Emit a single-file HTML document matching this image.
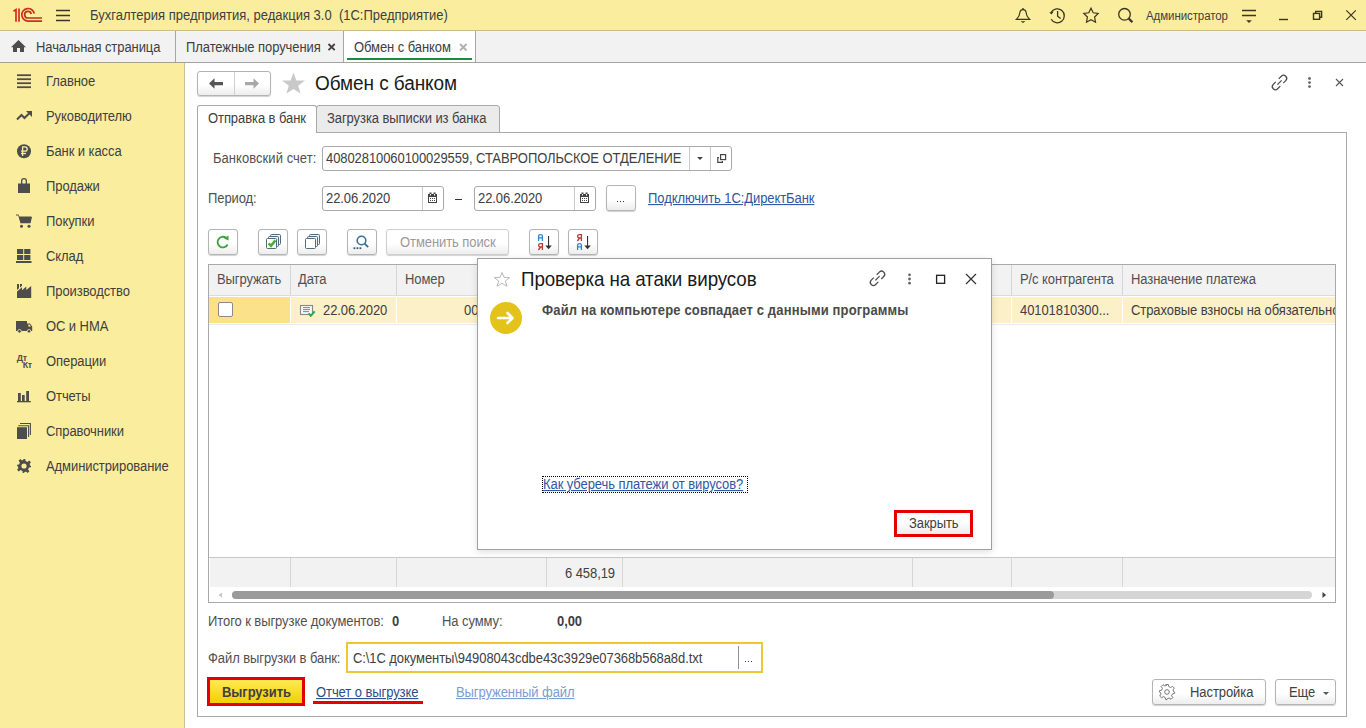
<!DOCTYPE html>
<html><head><meta charset="utf-8">
<style>
*{margin:0;padding:0;box-sizing:border-box}
html,body{width:1366px;height:728px;overflow:hidden;background:#fff;font-family:"Liberation Sans",sans-serif;font-size:13px;color:#333}
.a{position:absolute}
.t{position:absolute;white-space:nowrap;line-height:15px;font-size:13px;color:#404040;transform:scaleY(1.08);transform-origin:0 0;letter-spacing:-0.08px}
svg{position:absolute;overflow:visible}
#top{left:0;top:0;width:1366px;height:31px;background:#FBED9E;border-bottom:1px solid #C9BC86}
#tabs{left:0;top:31px;width:1366px;height:32px;background:#F2F2F2;border-top:1px solid #FCF6DC;border-bottom:1px solid #A3A3A3}
#side{left:0;top:63px;width:185px;height:665px;background:#FBED9E;border-right:1px solid #C9BF98}
.btn{position:absolute;border:1px solid #B4B4B4;border-radius:3px;background:linear-gradient(#fff 0%,#fff 55%,#EDEDED 100%);box-shadow:0 1px 1px rgba(0,0,0,.18)}
.fld{position:absolute;border:1px solid #A9A9A9;border-radius:3px;background:#fff}
.link{color:#2F56A3;text-decoration:underline}
</style></head><body>

<!-- TOP BAR -->
<div id="top" class="a"></div>
<div class="t" style="left:90px;top:7px;letter-spacing:0">Бухгалтерия предприятия, редакция 3.0&nbsp; (1С:Предприятие)</div>
<div class="t" style="left:1146px;top:8px;font-size:11.5px">Администратор</div>

<!-- TAB BAR -->
<div id="tabs" class="a"></div><div class="a" style="left:0;top:62px;width:185px;height:1px;background:#A8A28A"></div>
<div class="a" style="left:175px;top:31px;width:1px;height:31px;background:#A6A6A6"></div>
<div class="a" style="left:343px;top:31px;width:133px;height:31px;background:#fff;border-left:1px solid #A6A6A6;border-right:1px solid #A6A6A6"></div>
<div class="a" style="left:347px;top:58px;width:125px;height:2px;background:#1D8B3C"></div>
<div class="t" style="left:36px;top:39px">Начальная страница</div>
<div class="t" style="left:186px;top:39px">Платежные поручения</div>
<div class="t" style="left:354px;top:39px">Обмен с банком</div>

<!-- SIDEBAR -->
<div id="side" class="a"></div>
<div class="t" style="left:46px;top:73px">Главное</div>
<div class="t" style="left:46px;top:108px">Руководителю</div>
<div class="t" style="left:46px;top:143px">Банк и касса</div>
<div class="t" style="left:46px;top:178px">Продажи</div>
<div class="t" style="left:46px;top:213px">Покупки</div>
<div class="t" style="left:46px;top:248px">Склад</div>
<div class="t" style="left:46px;top:283px">Производство</div>
<div class="t" style="left:46px;top:318px">ОС и НМА</div>
<div class="t" style="left:46px;top:353px">Операции</div>
<div class="t" style="left:46px;top:388px">Отчеты</div>
<div class="t" style="left:46px;top:423px">Справочники</div>
<div class="t" style="left:46px;top:458px">Администрирование</div>

<!-- FORM HEADER -->
<div class="btn" style="left:197px;top:71px;width:74px;height:25px"></div>
<div class="a" style="left:234px;top:72px;width:1px;height:23px;background:#D0D0D0"></div>
<div class="t" style="left:315px;top:72px;font-size:19px;line-height:22px;color:#1a1a1a">Обмен с банком</div>

<!-- FORM TABS / PANEL -->
<div class="a" style="left:197px;top:132px;width:1150px;height:585px;border:1px solid #A9A9A9;border-top:none"></div>
<div class="a" style="left:499px;top:132px;width:848px;height:1px;background:#A9A9A9"></div>
<div class="a" style="left:197px;top:105px;width:120px;height:28px;background:#fff;border:1px solid #A9A9A9;border-bottom:none;border-radius:3px 3px 0 0"></div>
<div class="a" style="left:316px;top:105px;width:184px;height:28px;background:#EBEBEB;border:1px solid #A9A9A9;border-radius:3px 3px 0 0"></div>
<div class="t" style="left:208px;top:110px">Отправка в банк</div>
<div class="t" style="left:327px;top:110px">Загрузка выписки из банка</div>

<div class="t" style="left:213px;top:150px;color:#505050;letter-spacing:0.05px">Банковский счет:</div>
<div class="fld" style="left:322px;top:146px;width:410px;height:25px"></div>
<div class="a" style="left:689px;top:147px;width:1px;height:23px;background:#C8C8C8"></div>
<div class="a" style="left:710px;top:147px;width:1px;height:23px;background:#C8C8C8"></div>
<div class="t" style="left:326px;top:150px">40802810060100029559, СТАВРОПОЛЬСКОЕ ОТДЕЛЕНИЕ</div>

<div class="t" style="left:208px;top:190px;color:#505050">Период:</div>
<div class="fld" style="left:322px;top:186px;width:122px;height:25px"></div>
<div class="a" style="left:422px;top:187px;width:1px;height:23px;background:#C8C8C8"></div>
<div class="t" style="left:326px;top:190px">22.06.2020</div>
<div class="a" style="left:455px;top:199px;width:7px;height:1px;background:#333"></div>
<div class="fld" style="left:474px;top:186px;width:122px;height:25px"></div>
<div class="a" style="left:574px;top:187px;width:1px;height:23px;background:#C8C8C8"></div>
<div class="t" style="left:478px;top:190px">22.06.2020</div>
<div class="btn" style="left:606px;top:185px;width:30px;height:26px"></div>
<div class="a" style="left:617px;top:201px;width:1px;height:1px;background:#333;box-shadow:3px 0 #333,6px 0 #333"></div>
<div class="t link" style="left:648px;top:190px">Подключить 1С:ДиректБанк</div>

<!-- TOOLBAR -->
<div class="btn" style="left:208px;top:229px;width:30px;height:26px"></div>
<div class="btn" style="left:258px;top:229px;width:30px;height:26px"></div>
<div class="btn" style="left:297px;top:229px;width:30px;height:26px"></div>
<div class="btn" style="left:347px;top:229px;width:30px;height:26px"></div>
<div class="btn" style="left:386px;top:229px;width:123px;height:26px;border-color:#CFCFCF"></div>
<div class="t" style="left:400px;top:234px;color:#9A9A9A">Отменить поиск</div>
<div class="btn" style="left:529px;top:229px;width:30px;height:26px"></div>
<div class="btn" style="left:568px;top:229px;width:30px;height:26px"></div>

<!-- TABLE -->
<div class="a" style="left:208px;top:264px;width:1128px;height:339px;border:1px solid #A9A9A9;background:#fff"></div>
<div class="a" style="left:209px;top:265px;width:1126px;height:30px;background:#F2F2F2"></div>
<div class="a" style="left:209px;top:297px;width:1126px;height:26px;background:#FCF0C8"></div>
<div class="a" style="left:209px;top:297px;width:81px;height:26px;background:#FBE28A"></div>
<div class="a" style="left:290px;top:265px;width:1px;height:30px;background:#D6D6D6"></div><div class="a" style="left:290px;top:296px;width:1px;height:27px;background:#fff"></div><div class="a" style="left:396px;top:265px;width:1px;height:30px;background:#D6D6D6"></div><div class="a" style="left:396px;top:296px;width:1px;height:27px;background:#fff"></div><div class="a" style="left:546px;top:265px;width:1px;height:30px;background:#D6D6D6"></div><div class="a" style="left:546px;top:296px;width:1px;height:27px;background:#fff"></div><div class="a" style="left:622px;top:265px;width:1px;height:30px;background:#D6D6D6"></div><div class="a" style="left:622px;top:296px;width:1px;height:27px;background:#fff"></div><div class="a" style="left:912px;top:265px;width:1px;height:30px;background:#D6D6D6"></div><div class="a" style="left:912px;top:296px;width:1px;height:27px;background:#fff"></div><div class="a" style="left:1011px;top:265px;width:1px;height:30px;background:#D6D6D6"></div><div class="a" style="left:1011px;top:296px;width:1px;height:27px;background:#fff"></div><div class="a" style="left:1122px;top:265px;width:1px;height:30px;background:#D6D6D6"></div><div class="a" style="left:1122px;top:296px;width:1px;height:27px;background:#fff"></div>
<div class="a" style="left:209px;top:295px;width:1126px;height:1px;background:#DCDCDC"></div><div class="a" style="left:209px;top:323px;width:1126px;height:1px;background:#fff"></div><div class="a" style="left:209px;top:324px;width:1126px;height:1px;background:#EBEBEB"></div>
<div class="t" style="left:217px;top:271px;color:#505050">Выгружать</div>
<div class="t" style="left:298px;top:271px;color:#505050">Дата</div>
<div class="t" style="left:405px;top:271px;color:#505050">Номер</div>
<div class="t" style="left:1020px;top:271px;color:#505050">Р/с контрагента</div>
<div class="t" style="left:1131px;top:271px;color:#505050">Назначение платежа</div>
<div class="a" style="left:218px;top:302px;width:15px;height:15px;border:1px solid #8A8A8A;border-radius:2px;background:#fff"></div>
<div class="t" style="left:323px;top:302px">22.06.2020</div>
<div class="t" style="left:464px;top:302px">00</div>
<div class="t" style="left:1020px;top:302px">40101810300...</div>
<div class="t" style="left:1131px;top:302px;width:204px;overflow:hidden">Страховые взносы на обязательное</div>
<div class="a" style="left:209px;top:557px;width:1126px;height:1px;background:#C8C8C8"></div>
<div class="a" style="left:210px;top:558px;width:1125px;height:29px;background:#F2F2F2"></div>
<div class="a" style="left:290px;top:558px;width:1px;height:29px;background:#D6D6D6"></div><div class="a" style="left:396px;top:558px;width:1px;height:29px;background:#D6D6D6"></div><div class="a" style="left:546px;top:558px;width:1px;height:29px;background:#D6D6D6"></div><div class="a" style="left:622px;top:558px;width:1px;height:29px;background:#D6D6D6"></div><div class="a" style="left:912px;top:558px;width:1px;height:29px;background:#D6D6D6"></div><div class="a" style="left:1011px;top:558px;width:1px;height:29px;background:#D6D6D6"></div><div class="a" style="left:1122px;top:558px;width:1px;height:29px;background:#D6D6D6"></div>
<div class="t" style="left:565px;top:565px">6 458,19</div>
<div class="a" style="left:232px;top:591px;width:1080px;height:8px;border-radius:4px;background:#D5D5D5"></div>
<div class="a" style="left:232px;top:591px;width:822px;height:8px;border-radius:4px;background:#9A9A9A"></div>

<!-- BOTTOM -->
<div class="t" style="left:208px;top:613px;color:#505050">Итого к выгрузке документов:</div>
<div class="t" style="left:392px;top:613px;font-weight:bold">0</div>
<div class="t" style="left:442px;top:613px;color:#505050">На сумму:</div>
<div class="t" style="left:557px;top:613px;font-weight:bold">0,00</div>
<div class="t" style="left:208px;top:650px;color:#505050">Файл выгрузки в банк:</div>
<div class="a" style="left:346px;top:642px;width:417px;height:31px;border:2px solid #EFC63A;background:#fff"></div>
<div class="a" style="left:738px;top:646px;width:1px;height:23px;background:#909090"></div>
<div class="t" style="left:353px;top:650px">C:\1C документы\94908043cdbe43c3929e07368b568a8d.txt</div>
<div class="a" style="left:745px;top:661px;width:1.2px;height:1.2px;background:#444;box-shadow:3px 0 #444,6px 0 #444"></div>

<div class="a" style="left:207px;top:677px;width:98px;height:29px;border:3px solid #E50000;background:linear-gradient(#FFEA55,#F4CF00)"></div>
<div class="t" style="left:222px;top:684px;font-weight:bold">Выгрузить</div>
<div class="t link" style="left:316px;top:684px;color:#2B4C8C">Отчет о выгрузке</div>
<div class="a" style="left:313px;top:701px;width:110px;height:3px;background:#E50000"></div>
<div class="t link" style="left:456px;top:684px;color:#7B9CD1">Выгруженный файл</div>

<div class="btn" style="left:1152px;top:679px;width:114px;height:26px"></div>
<div class="t" style="left:1190px;top:684px">Настройка</div>
<div class="btn" style="left:1275px;top:679px;width:61px;height:26px"></div>
<div class="t" style="left:1289px;top:684px">Еще</div>


<!-- ICONS MAIN -->
<svg width="1366" height="728" style="left:0;top:0" viewBox="0 0 1366 728">
 <!-- 1C logo -->
 <g fill="none" stroke="#D52B1E" stroke-width="1.7">
  <path d="M13.5 11.2 L16 9.6 L16 21.8"/>
  <path d="M19 8.6 L19 21.8"/>
  <path d="M34.3 13.6 A6.3 6.3 0 1 0 28.2 21.1 L42 21.1"/>
  <path d="M31.2 14 A3.3 3.3 0 1 0 28.2 18 L42 18" stroke="#B8341A"/>
 </g>
 <!-- hamburger -->
 <g stroke="#3b3522" stroke-width="1.4">
  <path d="M56 10.5H70M56 15.5H70M56 20.5H70"/>
 </g>
 <!-- bell -->
 <g fill="none" stroke="#3b3522" stroke-width="1.2">
  <path d="M1016.5 19.3 C1019 17 1019.8 14.5 1020 12 C1020.2 10.3 1021.5 9.6 1023 9.6 C1024.5 9.6 1025.8 10.3 1026 12 C1026.2 14.5 1027 17 1029.5 19.3 Z"/>
 </g>
 <circle cx="1023" cy="8.9" r="0.9" fill="#3b3522"/>
 <path d="M1020.5 21.3 H1025.5 L1023 23 Z" fill="#3b3522"/>
 <!-- history -->
 <g fill="none" stroke="#3b3522" stroke-width="1.3">
  <path d="M1051.3 12.2 A7 7 0 1 1 1051.2 19.3"/>
  <path d="M1057.6 11 V16.2 L1060.6 18.6"/>
 </g>
 <path d="M1049.3 12.4 L1053.6 11.6 L1051.6 14.6 Z" fill="#3b3522"/>
 <!-- star outline -->
 <path d="M1091 8.2 L1093.2 12.8 L1098.2 13.5 L1094.6 17 L1095.5 22.2 L1091 19.8 L1086.5 22.2 L1087.4 17 L1083.8 13.5 L1088.8 12.8 Z" fill="none" stroke="#3b3522" stroke-width="1.2" stroke-linejoin="miter"/>
 <!-- search -->
 <circle cx="1124.5" cy="14.3" r="5.8" fill="none" stroke="#3b3522" stroke-width="1.3"/>
 <path d="M1128.8 18.6 L1132.4 22.2" stroke="#3b3522" stroke-width="2.2"/>
 <!-- filter -->
 <path d="M1242 10.5H1256M1242 15.5H1256" stroke="#3b3522" stroke-width="1.4"/>
 <path d="M1246.2 20.2H1251.8L1249 23Z" fill="#3b3522"/>
 <!-- minimize -->
 <path d="M1279 19.5H1288" stroke="#3b3522" stroke-width="1.4"/>
 <!-- restore -->
 <g fill="none" stroke="#3b3522" stroke-width="1.4">
  <path d="M1315.7 13 V11.4 H1321.6 V17.2 H1319.8"/>
  <rect x="1313.5" y="13.4" width="6.1" height="5.9"/>
 </g>
 <!-- close -->
 <path d="M1346.3 10.3 L1355.8 19.8 M1355.8 10.3 L1346.3 19.8" stroke="#3b3522" stroke-width="1.2"/>

 <!-- home -->
 <path d="M18.5 40 L11 47.3 H13 V52 H17 V48 H20 V52 H24 V47.3 H26 Z" fill="#4D4D4D"/>
 <!-- tab close bold -->
 <path d="M328.5 44 L334.7 50.2 M334.7 44 L328.5 50.2" stroke="#404040" stroke-width="1.8"/>
 <!-- tab close light -->
 <path d="M460 44 L466.5 50.5 M466.5 44 L460 50.5" stroke="#B0B0B0" stroke-width="1.8"/>

 <!-- sidebar icons -->
 <g fill="#4D4D4D">
  <rect x="17" y="74.3" width="14" height="1.8"/><rect x="17" y="78.3" width="14" height="1.8"/><rect x="17" y="82.3" width="14" height="1.8"/><rect x="17" y="86.3" width="14" height="1.8"/>
 </g>
 <path d="M17 119.5 L21.5 115 L24.5 118 L29.5 113" fill="none" stroke="#4D4D4D" stroke-width="2"/>
 <path d="M26 111 H32 V117 Z" fill="#4D4D4D"/>
 <circle cx="24" cy="151.2" r="7" fill="#4D4D4D"/>
 <g fill="none" stroke="#FBED9E" stroke-width="1.3"><path d="M22.6 156 V146.8 H25 A2.2 2.2 0 0 1 25 151.2 H21"/><path d="M21 153.5 H26"/></g>
 <path d="M18 183.5 H21 V181 A3 3 0 0 1 27 181 V183.5 H30 V193 H18 Z M22.3 183.5 H25.7 V181 A1.7 1.7 0 0 0 22.3 181 Z" fill="#4D4D4D" fill-rule="evenodd"/>
 <path d="M16 214.5 H18.5 L19.5 217 H32 L30.5 223.2 H20.5 L18.2 215.6 H16 Z" fill="#4D4D4D"/>
 <path d="M19 216.5 H31.5 L30 223 H21 Z" fill="#4D4D4D"/>
 <circle cx="21.5" cy="226.2" r="1.5" fill="#4D4D4D"/><circle cx="29" cy="226.2" r="1.5" fill="#4D4D4D"/>
 <g fill="#4D4D4D">
  <rect x="17" y="249" width="6.2" height="5"/><rect x="24.2" y="249" width="6.2" height="5"/><rect x="17" y="255" width="6.2" height="5"/><rect x="24.2" y="255" width="6.2" height="5"/><rect x="16" y="261" width="15.5" height="2"/>
 </g>
 <path d="M17 298 V291.5 L22 287.2 V290.3 L26.3 286.5 V290 L31.2 286 V298 Z M17 290 V284 H19 V288.3 Z M20 287.5 V284 H22 V285.8 Z" fill="#4D4D4D"/>
 <path d="M16 321 H27 V331 H16 Z M27 323.5 H30 L32.2 326.5 V331 H27 Z" fill="#4D4D4D"/>
 <path d="M28.3 324.5 H29.6 L31 326.5 H28.3 Z" fill="#FBED9E"/>
 <circle cx="19.5" cy="331.3" r="1.8" fill="#4D4D4D" stroke="#FBED9E" stroke-width="0.8"/><circle cx="29" cy="331.3" r="1.8" fill="#4D4D4D" stroke="#FBED9E" stroke-width="0.8"/>
 <text x="16.8" y="360.6" font-family="Liberation Sans" font-weight="bold" font-size="8.8" letter-spacing="-0.3" fill="#4D4D4D">Дт</text>
 <text x="22.7" y="368" font-family="Liberation Sans" font-weight="bold" font-size="8.8" letter-spacing="-0.3" fill="#4D4D4D">Кт</text>
 <g fill="#4D4D4D"><rect x="18" y="393" width="2.8" height="8.3"/><rect x="22" y="395" width="2.7" height="6.3"/><rect x="26.2" y="391" width="2.8" height="10.3"/><rect x="17" y="401" width="13.8" height="1.3"/></g>
 <rect x="17" y="427.2" width="10" height="11.8" fill="#4D4D4D"/>
 <path d="M18.2 425.7 H28.6 V437" fill="none" stroke="#4D4D4D" stroke-width="1.1"/>
 <path d="M20 423.5 H30.4 V435" fill="none" stroke="#4D4D4D" stroke-width="1.1"/>
 <g transform="translate(24 466)">
  <path d="M-1.2 -7 H1.2 L1.6 -4.9 L3.5 -4.1 L5.2 -5.4 L6.9 -3.7 L5.6 -2 L6.4 -0.1 L7 0 V0 L7 1.2 L4.9 1.6 L4.1 3.5 L5.4 5.2 L3.7 6.9 L2 5.6 L0.1 6.4 L-0.2 7 H-1.2 L-1.6 4.9 L-3.5 4.1 L-5.2 5.4 L-6.9 3.7 L-5.6 2 L-6.4 0.1 L-7 -0.2 V-1.2 L-4.9 -1.6 L-4.1 -3.5 L-5.4 -5.2 L-3.7 -6.9 L-2 -5.6 L-0.1 -6.4 Z" fill="#4D4D4D"/>
  <circle r="2.6" fill="#FBED9E"/>
 </g>

 <!-- nav arrows -->
 <path d="M209 83.5 L214.5 78.3 V81.9 H223 V85.2 H214.5 V88.8 Z" fill="#555"/>
 <path d="M259 83.5 L253.5 78.3 V81.9 H245 V85.2 H253.5 V88.8 Z" fill="#A8A8A8"/>
 <!-- big star -->
 <path d="M293.5 72.6 L296.4 80.4 L305 80.6 L298.2 85.7 L300.6 93.6 L293.5 88.9 L286.4 93.6 L288.8 85.7 L282 80.6 L290.6 80.4 Z" fill="#C9C9C9"/>
 <!-- form link icon -->
 <g transform="translate(1279.5 82.5) rotate(-45)" fill="none" stroke="#4a4a4a" stroke-width="1.25"><path d="M2 -3.1 H5.7 A3.1 3.1 0 0 1 5.7 3.1 H2.2"/><path d="M-2 3.1 H-5.7 A3.1 3.1 0 0 1 -5.7 -3.1 H-2.2"/><path d="M-3 0 H3"/></g>
 <g fill="#666"><circle cx="1309.5" cy="78.5" r="1.4"/><circle cx="1309.5" cy="82.6" r="1.4"/><circle cx="1309.5" cy="86.6" r="1.4"/></g>
 <path d="M1336 79 L1343 86 M1343 79 L1336 86" stroke="#555" stroke-width="1.1"/>

 <!-- bank field icons -->
 <path d="M697 157 H703 L700 160 Z" fill="#444"/>
 <g fill="none" stroke="#444" stroke-width="1.2"><rect x="720.6" y="154.6" width="5" height="5"/><path d="M718.9 157.6 H717.8 V162.3 H722.4 V161"/></g>
 <!-- calendars -->
 <g id="cal">
  <rect x="428.5" y="194.5" width="8" height="8" fill="none" stroke="#444" stroke-width="1"/>
  <rect x="428" y="194" width="9" height="3" fill="#444"/>
  <rect x="429.5" y="192.5" width="2" height="2.5" fill="#444"/><rect x="433.5" y="192.5" width="2" height="2.5" fill="#444"/>
  <rect x="430" y="194" width="1" height="1.5" fill="#fff"/><rect x="434" y="194" width="1" height="1.5" fill="#fff"/>
  <g fill="#444"><rect x="430" y="198" width="1" height="1"/><rect x="432" y="198" width="1" height="1"/><rect x="434" y="198" width="1" height="1"/><rect x="430" y="200" width="1" height="1"/><rect x="432" y="200" width="1" height="1"/><rect x="434" y="200" width="1" height="1"/></g>
 </g>
 <use href="#cal" x="152"/>

 <!-- toolbar icons -->
 <path d="M227.6 244.5 A5.3 5.3 0 1 1 226 237.8" fill="none" stroke="#3DA33D" stroke-width="1.8"/>
 <path d="M224 238.5 L228.4 235.6 L228.6 240.6 Z" fill="#3DA33D"/>
 <g stroke="#52697E" stroke-width="1" fill="#EEF3F7">
  <rect x="270.5" y="234.5" width="10" height="10" rx="1"/><rect x="268.5" y="236.5" width="10" height="10" rx="1"/><rect x="266.5" y="238.5" width="10" height="10" rx="1" fill="#fff"/>
 </g>
 <path d="M268.6 243.3 L271 245.8 L275.4 240.4" fill="none" stroke="#4FAE2E" stroke-width="2.6"/>
 <g stroke="#52697E" stroke-width="1" fill="#EEF3F7">
  <rect x="309.5" y="234.5" width="10" height="10" rx="1"/><rect x="307.5" y="236.5" width="10" height="10" rx="1"/><rect x="305.5" y="238.5" width="10" height="10" rx="1" fill="#fff"/>
 </g>
 <circle cx="361.5" cy="240.5" r="4.3" fill="none" stroke="#3A6E96" stroke-width="1.6"/>
 <path d="M364.6 243.6 L368.2 247.2" stroke="#3A6E96" stroke-width="1.8"/>
 <g fill="#3A5A73"><rect x="353.5" y="247.3" width="1.8" height="1.8"/><rect x="356.5" y="247.3" width="1.8" height="1.8"/><rect x="359.5" y="247.3" width="1.8" height="1.8"/></g>
 <path d="M538.6 241 V236 Q538.6 234.6 540.5 234.6 Q542.4 234.6 542.4 236 V241 M538.6 237.9 H542.4" fill="none" stroke="#3B82C4" stroke-width="1.3"/><path d="M542.4 250 V243.6 H540.4 Q538.6 243.6 538.6 245.3 Q538.6 247 540.4 247 H542.4 M540.6 247 L538.4 250" fill="none" stroke="#C0353B" stroke-width="1.3"/><path d="M581.4 241 V234.6 H579.4 Q577.6 234.6 577.6 236.3 Q577.6 238 579.4 238 H581.4 M579.6 238 L577.4 241" fill="none" stroke="#C0353B" stroke-width="1.3"/><path d="M577.6 250 V245 Q577.6 243.6 579.5 243.6 Q581.4 243.6 581.4 245 V250 M577.6 246.9 H581.4" fill="none" stroke="#3B82C4" stroke-width="1.3"/>
 <g fill="#333"><rect x="548" y="236" width="1.1" height="11"/><path d="M545.3 245.5 H551.8 L548.55 249.2 Z"/><rect x="587" y="236" width="1.1" height="11"/><path d="M584.3 245.5 H590.8 L587.55 249.2 Z"/></g>

 <!-- doc icon -->
 <rect x="300.5" y="305.5" width="12" height="9" fill="#F4F6FA" stroke="#888" stroke-width="1.1"/>
 <path d="M303 307.6H310M303 309.6H310M303 311.6H309" stroke="#777" stroke-width="0.9"/>
 <path d="M308.6 313.3 L310.8 315.8 L314.7 311.4" fill="none" stroke="#2DA84A" stroke-width="2"/>
 <!-- scroll arrows -->
 <path d="M222 592.5 V597.5 L218.5 595 Z" fill="#C8C8C8"/>
 <path d="M1322.5 592 V598 L1326.2 595 Z" fill="#444"/>
 <!-- gear -->
 <g transform="translate(1167 692)" fill="none" stroke="#777" stroke-width="1">
  <path d="M-1.3 -7.5 H1.3 L1.8 -5.4 L3.7 -4.5 L5.5 -5.7 L7.3 -3.9 L6 -2.1 L6.7 -0.2 L7.6 0 V1.3 L5.5 1.8 L4.6 3.7 L5.8 5.5 L4 7.3 L2.2 6 L0.3 6.7 L0 7.6 H-1.3 L-1.8 5.5 L-3.7 4.6 L-5.5 5.8 L-7.3 4 L-6 2.2 L-6.7 0.3 L-7.6 -0.1 V-1.3 L-5.5 -1.8 L-4.6 -3.7 L-5.8 -5.5 L-4 -7.3 L-2.2 -6 L-0.3 -6.7 Z"/>
  <circle r="2.3"/>
 </g>
 <path d="M1323 692 H1329 L1326 695 Z" fill="#555"/>
</svg>

<!-- DIALOG -->
<div class="a" style="left:477px;top:258px;width:515px;height:292px;border:1px solid #A0A0A0;background:#fff;box-shadow:0 2px 7px rgba(0,0,0,.13)"></div>
<div class="t" style="left:521px;top:268px;font-size:18.8px;letter-spacing:-0.1px;line-height:22px;color:#1a1a1a">Проверка на атаки вирусов</div>
<div class="a" style="left:490px;top:302px;width:32px;height:32px;border-radius:50%;background:#E3C31A"></div>
<div class="t" style="left:542px;top:302px;font-weight:bold;color:#4a4a4a;letter-spacing:0.15px">Файл на компьютере совпадает с данными программы</div>
<div class="a" style="left:542px;top:476px;width:206px;height:17px;border:1px dotted #000"></div>
<div class="t link" style="left:543px;top:476px">Как уберечь платежи от вирусов?</div>
<div class="a" style="left:894px;top:510px;width:79px;height:27px;border:3px solid #E50000;background:linear-gradient(#fff 40%,#EDEDED)"></div>
<div class="t" style="left:909px;top:515px;color:#404040">Закрыть</div>


<svg width="1366" height="728" style="left:0;top:0" viewBox="0 0 1366 728">
 <path d="M502 272.5 L504 277.3 L509.6 277.6 L505.3 281 L506.9 286.2 L502 283.3 L497.1 286.2 L498.7 281 L494.4 277.6 L500 277.3 Z" fill="none" stroke="#B8B8B8" stroke-width="1"/>
 <path d="M498 318 H512 M507.5 313 L512.5 318 L507.5 323" fill="none" stroke="#fff" stroke-width="2.6" stroke-linecap="round" stroke-linejoin="round"/>
 <g transform="translate(877.5 278.3) rotate(-45)" fill="none" stroke="#4a4a4a" stroke-width="1.25"><path d="M2 -3.1 H5.7 A3.1 3.1 0 0 1 5.7 3.1 H2.2"/><path d="M-2 3.1 H-5.7 A3.1 3.1 0 0 1 -5.7 -3.1 H-2.2"/><path d="M-3 0 H3"/></g>
 <g fill="#666"><circle cx="909.5" cy="274.8" r="1.4"/><circle cx="909.5" cy="279" r="1.4"/><circle cx="909.5" cy="283.2" r="1.4"/></g>
 <rect x="936.6" y="275.3" width="8" height="8" fill="none" stroke="#222" stroke-width="1.3"/>
 <path d="M966 274 L976 284 M976 274 L966 284" stroke="#333" stroke-width="1.2"/>
</svg>

</body></html>
